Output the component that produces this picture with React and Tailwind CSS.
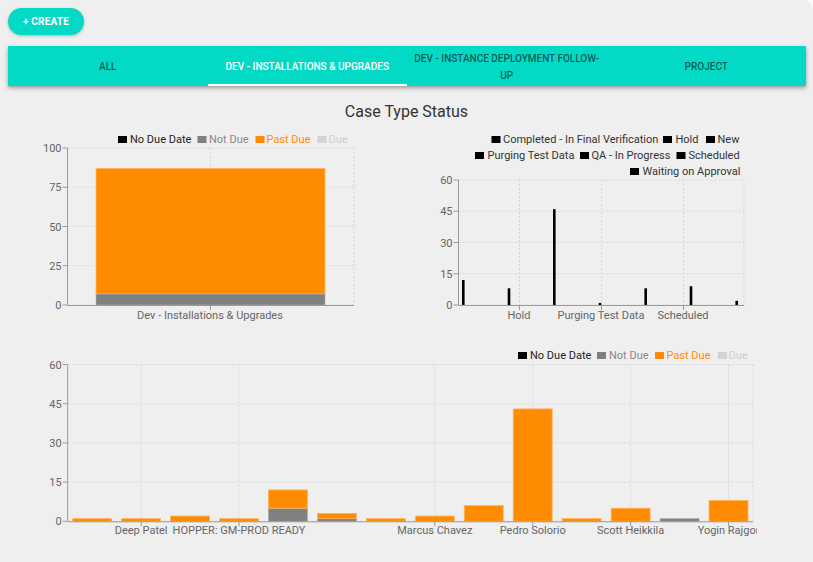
import React from 'react';

const ORANGE = '#ff8c00';
const GRAY = '#808080';
const LIGHT = '#d3d3d3';
const GRID = '#d6d6d6';
const AXIS = '#9a9a9a';
const TICK = '#666666';

const tabs = [
  { label: 'ALL' },
  { label: 'DEV - INSTALLATIONS & UPGRADES', active: true },
  { label: ['DEV - INSTANCE DEPLOYMENT FOLLOW-', 'UP'] },
  { label: 'PROJECT' },
];

const dueLegend = [
  { name: 'No Due Date', box: '#000000', text: '#222222' },
  { name: 'Not Due', box: GRAY, text: '#8a8a8a' },
  { name: 'Past Due', box: ORANGE, text: ORANGE },
  { name: 'Due', box: LIGHT, text: '#cfcfcf' },
];

// Legend item: square + label, page coordinates
const LegendItem = ({ x, tx, y, box, text, label, fill }) => (
  <g>
    <rect x={x} y={y - 7} width={9} height={7} fill={box} />
    <text x={tx} y={y} fontSize="11" fill={fill || text}>
      {label}
    </text>
  </g>
);

// Y axis with dashed grid
const YAxis = ({ x0, x1, ticks }) => (
  <g>
    {ticks.map((t) => (
      <g key={t.v}>
        <line x1={x0 - 5} x2={x0} y1={t.y} y2={t.y} stroke={AXIS} strokeWidth="1" />
        <line x1={x0} x2={x1} y1={t.y} y2={t.y} stroke={GRID} strokeDasharray="2 2" strokeWidth="1" />
        <text x={x0 - 6} y={t.y + 4} fontSize="11" fill={TICK} textAnchor="end">
          {t.v}
        </text>
      </g>
    ))}
  </g>
);

const ChartOne = () => {
  const base = 305;
  const top = 148;
  const k = (base - top) / 100;
  const ticks = [100, 75, 50, 25, 0].map((v) => ({ v, y: base - v * k }));
  const pos = [
    { x: 118, tx: 130 },
    { x: 197.5, tx: 209 },
    { x: 255.5, tx: 266.5 },
    { x: 317.5, tx: 328.5 },
  ];
  return (
    <svg width="399" height="195" viewBox="8 130 399 195" className="block shrink-0">
      {dueLegend.map((l, i) => (
        <LegendItem key={l.name} {...pos[i]} y={143} box={l.box} text={l.text} label={l.name} />
      ))}
      <YAxis x0={67.5} x1={354} ticks={ticks} />
      <line x1={210.5} x2={210.5} y1={top} y2={base} stroke={GRID} strokeDasharray="2 2" />
      <line x1={354} x2={354} y1={top} y2={base} stroke={GRID} strokeDasharray="2 2" />
      <rect x={96} y={base - 87 * k} width={229} height={80 * k} fill={ORANGE} stroke="#ffb45c" strokeWidth="0.8" />
      <rect x={96} y={base - 7 * k} width={229} height={7 * k} fill={GRAY} stroke="#b0b0b0" strokeWidth="0.6" />
      <line x1={67.5} x2={67.5} y1={top} y2={base} stroke={AXIS} />
      <line x1={67.5} x2={354} y1={base + 0.5} y2={base + 0.5} stroke={AXIS} />
      <line x1={210.5} x2={210.5} y1={base} y2={base + 5} stroke={AXIS} />
      <text x={210} y={319} fontSize="11" fill={TICK} textAnchor="middle">
        Dev - Installations &amp; Upgrades
      </text>
    </svg>
  );
};

const statusLegend = [
  { x: 491.5, tx: 503, y: 143, label: 'Completed - In Final Verification' },
  { x: 663, tx: 675.5, y: 143, label: 'Hold' },
  { x: 706, tx: 717.5, y: 143, label: 'New' },
  { x: 475, tx: 487.5, y: 159, label: 'Purging Test Data' },
  { x: 580, tx: 591.5, y: 159, label: 'QA - In Progress' },
  { x: 676.5, tx: 688.5, y: 159, label: 'Scheduled' },
  { x: 630, tx: 642.5, y: 175, label: 'Waiting on Approval' },
];

const statusBars = [
  { x: 463.3, v: 12 },
  { x: 509, v: 8 },
  { x: 554.3, v: 46 },
  { x: 600, v: 1 },
  { x: 645.7, v: 8 },
  { x: 691, v: 9 },
  { x: 736.7, v: 2 },
];

const ChartTwo = () => {
  const base = 305;
  const top = 180;
  const k = (base - top) / 60;
  const ticks = [60, 45, 30, 15, 0].map((v) => ({ v, y: base - v * k }));
  const cats = [
    { x: 519, label: 'Hold' },
    { x: 601, label: 'Purging Test Data' },
    { x: 683, label: 'Scheduled' },
  ];
  return (
    <svg width="399" height="195" viewBox="407 130 399 195" className="block shrink-0">
      {statusLegend.map((l) => (
        <LegendItem key={l.label} {...l} box="#000000" fill="#333333" />
      ))}
      <YAxis x0={458.5} x1={744} ticks={ticks} />
      {cats.map((c) => (
        <g key={c.label}>
          <line x1={c.x + 0.5} x2={c.x + 0.5} y1={top} y2={base} stroke={GRID} strokeDasharray="2 2" />
          <line x1={c.x + 0.5} x2={c.x + 0.5} y1={base} y2={base + 5} stroke={AXIS} />
          <text x={c.x} y={319} fontSize="11" fill={TICK} textAnchor="middle">
            {c.label}
          </text>
        </g>
      ))}
      <line x1={744} x2={744} y1={top} y2={base} stroke={GRID} strokeDasharray="2 2" />
      {statusBars.map((b) => (
        <rect key={b.x} x={b.x - 1.3} y={base - b.v * k} width={2.6} height={b.v * k} fill="#000000" />
      ))}
      <line x1={458.5} x2={458.5} y1={top} y2={base} stroke={AXIS} />
      <line x1={458.5} x2={744} y1={base + 0.5} y2={base + 0.5} stroke={AXIS} />
    </svg>
  );
};

const people = [
  { o: 1, g: 0 },
  { o: 1, g: 0, label: 'Deep Patel' },
  { o: 2, g: 0 },
  { o: 1, g: 0, label: 'HOPPER: GM-PROD READY' },
  { o: 7, g: 5 },
  { o: 2, g: 1 },
  { o: 1, g: 0 },
  { o: 2, g: 0, label: 'Marcus Chavez' },
  { o: 6, g: 0 },
  { o: 43, g: 0, label: 'Pedro Solorio' },
  { o: 1, g: 0 },
  { o: 5, g: 0, label: 'Scott Heikkila' },
  { o: 0, g: 1 },
  { o: 8, g: 0, label: 'Yogin Rajgor' },
];

const ChartThree = () => {
  const base = 521.3;
  const top = 364.5;
  const left = 67.7;
  const right = 753;
  const k = (base - top) / 60;
  const step = (right - left) / people.length;
  const ticks = [60, 45, 30, 15, 0].map((v) => ({ v, y: base - v * k }));
  const pos = [
    { x: 518, tx: 530 },
    { x: 597, tx: 609 },
    { x: 655, tx: 666.5 },
    { x: 718, tx: 728.5 },
  ];
  return (
    <svg width="749" height="200" viewBox="8 340 749 200" className="block">
      {dueLegend.map((l, i) => (
        <LegendItem key={l.name} {...pos[i]} y={359} box={l.box} text={l.text} label={l.name} />
      ))}
      <YAxis x0={left} x1={right} ticks={ticks} />
      {people.map((p, i) => {
        const c = left + step * (i + 0.5);
        if (!p.label) return null;
        return (
          <g key={p.label}>
            <line x1={c} x2={c} y1={top} y2={base} stroke={GRID} strokeDasharray="2 2" />
            <line x1={c} x2={c} y1={base} y2={base + 5} stroke={AXIS} />
            <text x={c} y={534} fontSize="11" fill={TICK} textAnchor="middle">
              {p.label}
            </text>
          </g>
        );
      })}
      <line x1={right} x2={right} y1={top} y2={base} stroke={GRID} strokeDasharray="2 2" />
      {people.map((p, i) => {
        const x = left + step * i + 5;
        const w = step - 10;
        return (
          <g key={i}>
            {p.g > 0 && (
              <rect x={x} y={base - p.g * k} width={w} height={p.g * k} fill={GRAY} stroke="#a8a8a8" strokeWidth="0.6" />
            )}
            {p.o > 0 && (
              <rect
                x={x}
                y={base - (p.g + p.o) * k}
                width={w}
                height={p.o * k}
                fill={ORANGE}
                stroke="#ffb45c"
                strokeWidth="0.8"
              />
            )}
          </g>
        );
      })}
      <line x1={left} x2={left} y1={top} y2={base} stroke={AXIS} />
      <line x1={left} x2={right} y1={base + 0.5} y2={base + 0.5} stroke={AXIS} />
    </svg>
  );
};

export default function App() {
  return (
    <div className="min-h-[562px] bg-[#fafafa] font-['Roboto',sans-serif]">
      <div className="h-[562px] overflow-hidden rounded-tr-[10px] bg-[#efefef] px-[8px] pt-[8px]">
        <button className="flex h-[27px] w-[76px] items-center justify-center rounded-full bg-[#03dac5] text-[10px] font-bold tracking-[0.2px] text-white shadow-[0_1px_3px_rgba(0,0,0,0.25)]">
          + CREATE
        </button>

        <div className="mt-[11px] flex h-[40px] w-[798px] bg-[#03dac5] shadow-[0_2px_4px_rgba(0,0,0,0.35)]">
          {tabs.map((t, i) => (
            <div
              key={i}
              className={`relative flex flex-1 items-center justify-center pt-[1px] text-center text-[10px] font-medium leading-[17px] ${
                t.active ? 'text-white' : 'text-black/60'
              }`}
            >
              {Array.isArray(t.label) ? (
                <span>
                  {t.label[0]}
                  <br />
                  {t.label[1]}
                </span>
              ) : (
                <span>{t.label}</span>
              )}
              {t.active && <div className="absolute bottom-0 left-0 right-0 h-[2px] bg-white" />}
            </div>
          ))}
        </div>

        <div className="h-[44px] pt-[16px] text-center text-[16px] leading-[20px] text-[#333333]">
          Case Type Status
        </div>

        <div className="flex">
          <ChartOne />
          <ChartTwo />
        </div>

        <div className="mt-[15px]">
          <ChartThree />
        </div>
      </div>
    </div>
  );
}
